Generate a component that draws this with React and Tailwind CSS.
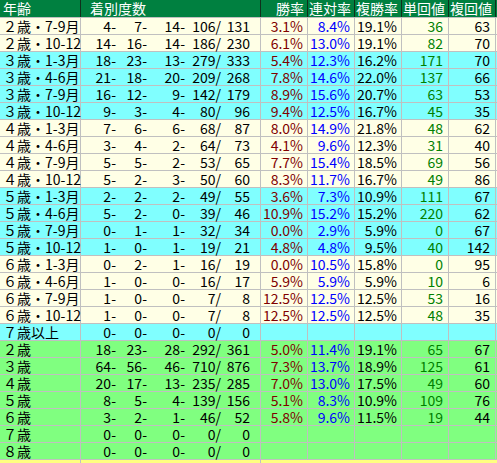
const CREAM = 'bg-[#ffffe6]'
const CYAN = 'bg-[#80ffff]'
const GREEN = 'bg-[#80ff80]'
const YELLOW = 'bg-[#ffff80]'

// [label, counts, win, ren, fuku, tan, fukuVal, bg]
const rows = [
  ['２歳・7-9月', [4, 7, 14, 106, 131], '3.1%', '8.4%', '19.1%', '36', '63', CREAM],
  ['２歳・10-12', [14, 16, 14, 186, 230], '6.1%', '13.0%', '19.1%', '82', '70', CREAM],
  ['３歳・1-3月', [18, 23, 13, 279, 333], '5.4%', '12.3%', '16.2%', '171', '70', CYAN],
  ['３歳・4-6月', [21, 18, 20, 209, 268], '7.8%', '14.6%', '22.0%', '137', '66', CYAN],
  ['３歳・7-9月', [16, 12, 9, 142, 179], '8.9%', '15.6%', '20.7%', '63', '53', CYAN],
  ['３歳・10-12', [9, 3, 4, 80, 96], '9.4%', '12.5%', '16.7%', '45', '35', CYAN],
  ['４歳・1-3月', [7, 6, 6, 68, 87], '8.0%', '14.9%', '21.8%', '48', '62', CREAM],
  ['４歳・4-6月', [3, 4, 2, 64, 73], '4.1%', '9.6%', '12.3%', '31', '40', CREAM],
  ['４歳・7-9月', [5, 5, 2, 53, 65], '7.7%', '15.4%', '18.5%', '69', '56', CREAM],
  ['４歳・10-12', [5, 2, 3, 50, 60], '8.3%', '11.7%', '16.7%', '49', '86', CREAM],
  ['５歳・1-3月', [2, 2, 2, 49, 55], '3.6%', '7.3%', '10.9%', '111', '67', CYAN],
  ['５歳・4-6月', [5, 2, 0, 39, 46], '10.9%', '15.2%', '15.2%', '220', '62', CYAN],
  ['５歳・7-9月', [0, 1, 1, 32, 34], '0.0%', '2.9%', '5.9%', '0', '67', CYAN],
  ['５歳・10-12', [1, 0, 1, 19, 21], '4.8%', '4.8%', '9.5%', '40', '142', CYAN],
  ['６歳・1-3月', [0, 2, 1, 16, 19], '0.0%', '10.5%', '15.8%', '0', '95', CREAM],
  ['６歳・4-6月', [1, 0, 0, 16, 17], '5.9%', '5.9%', '5.9%', '10', '6', CREAM],
  ['６歳・7-9月', [1, 0, 0, 7, 8], '12.5%', '12.5%', '12.5%', '53', '16', CREAM],
  ['６歳・10-12', [1, 0, 0, 7, 8], '12.5%', '12.5%', '12.5%', '48', '35', CREAM],
  ['７歳以上', [0, 0, 0, 0, 0], '', '', '', '', '', CYAN],
  ['２歳', [18, 23, 28, 292, 361], '5.0%', '11.4%', '19.1%', '65', '67', GREEN],
  ['３歳', [64, 56, 46, 710, 876], '7.3%', '13.7%', '18.9%', '125', '61', GREEN],
  ['４歳', [20, 17, 13, 235, 285], '7.0%', '13.0%', '17.5%', '49', '60', GREEN],
  ['５歳', [8, 5, 4, 139, 156], '5.1%', '8.3%', '10.9%', '109', '76', GREEN],
  ['６歳', [3, 2, 1, 46, 52], '5.8%', '9.6%', '11.5%', '19', '44', GREEN],
  ['７歳', [0, 0, 0, 0, 0], '', '', '', '', '', GREEN],
  ['８歳', [0, 0, 0, 0, 0], '', '', '', '', '', GREEN],
]

const cell = 'h-full border-r border-[#c0c0c0] text-right pr-[4px] whitespace-nowrap'
const headCell = 'h-full border-r border-[#10301c] text-right pr-[3px] whitespace-nowrap'

function Counts({ values }) {
  const [a, b, c, d, e] = values
  return (
    <div className="flex w-[180px] h-full border-r border-[#c0c0c0] tabular-nums">
      <span className="w-[35px] text-right">{a}-</span>
      <span className="w-[31px] text-right">{b}-</span>
      <span className="w-[38px] text-right">{c}-</span>
      <span className="w-[36px] text-right">{d}/</span>
      <span className="w-[29px] text-right">{e}</span>
    </div>
  )
}

export default function App() {
  return (
    <div className="w-[497px] h-[463px] overflow-hidden bg-white font-['Noto_Sans_CJK_JP',sans-serif] text-[14px] leading-[16px] text-black">
      <div className="flex h-[18px] bg-[#008040] text-white border-b border-[#c0c0c0] leading-[17px]">
        <div className="w-[81px] h-full border-r border-[#10301c] pl-[3px]">年齢</div>
        <div className="w-[180px] h-full border-r border-[#10301c] pl-[9px]">着別度数</div>
        <div className={`w-[47px] ${headCell}`}>勝率</div>
        <div className={`w-[47px] ${headCell}`}>連対率</div>
        <div className={`w-[47px] ${headCell}`}>複勝率</div>
        <div className={`w-[47px] ${headCell}`}>単回値</div>
        <div className={`w-[47px] ${headCell}`}>複回値</div>
      </div>

      {rows.map(([label, counts, win, ren, fuku, tan, fukuVal, bg]) => (
        <div key={label} className={`flex h-[17px] border-b border-[#c0c0c0] tabular-nums ${bg}`}>
          <div className="w-[81px] h-full border-r border-[#c0c0c0] pl-[3px] whitespace-nowrap">{label}</div>
          <Counts values={counts} />
          <div className={`w-[47px] ${cell} text-[#800000]`}>{win}</div>
          <div className={`w-[47px] ${cell} text-[#0000ff]`}>{ren}</div>
          <div className={`w-[47px] ${cell}`}>{fuku}</div>
          <div className={`w-[47px] ${cell} text-[#008000] pr-[5px]`}>{tan}</div>
          <div className={`w-[47px] ${cell} pr-[5px]`}>{fukuVal}</div>
        </div>
      ))}

      <div className={`flex h-[17px] ${YELLOW}`}>
        <div className="w-[81px] h-full border-r border-[#c0c0c0]"></div>
        <div className="w-[180px] h-full border-r border-[#c0c0c0]"></div>
      </div>
    </div>
  )
}
